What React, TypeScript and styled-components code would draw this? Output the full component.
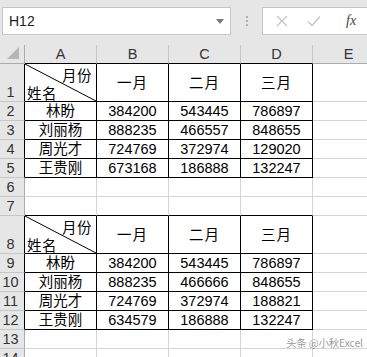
import React from "react";
import styled, { createGlobalStyle } from "styled-components";

const Global = createGlobalStyle`
  html, body { margin: 0; padding: 0; background: #fff; }
  body { width: 367px; height: 357px; overflow: hidden; }
`;

const Page = styled.div`
  position: relative;
  width: 367px;
  height: 357px;
  overflow: hidden;
  font-family: "Liberation Sans", "Noto Sans CJK SC", sans-serif;
`;

const FormulaBar = styled.div`
  height: 45px;
  box-sizing: border-box;
  background: #e6e6e6;
  display: flex;
  align-items: flex-start;
  padding: 7px 0 0 2px;
`;

const NameBox = styled.div`
  box-sizing: border-box;
  width: 229px;
  height: 28px;
  background: #fff;
  border: 1px solid #c6c6c6;
  display: flex;
  align-items: center;
  justify-content: space-between;
  padding: 0 6px 0 6px;
  font-size: 14px;
  color: #222;
`;

const Caret = styled.span`
  width: 0;
  height: 0;
  border-left: 4px solid transparent;
  border-right: 4px solid transparent;
  border-top: 5px solid #7a7a7a;
`;

const Dots = styled.div`
  width: 31px;
  height: 28px;
  display: flex;
  flex-direction: column;
  align-items: center;
  justify-content: center;
  gap: 2px;
  & > i {
    display: block;
    width: 2px;
    height: 2px;
    background: #b0b0b0;
  }
`;

const FormulaBox = styled.div`
  box-sizing: border-box;
  flex: 1;
  height: 28px;
  background: #fff;
  border: 1px solid #c6c6c6;
  border-right: none;
  display: flex;
  align-items: center;
  padding-left: 13px;
  gap: 19px;
`;

const Fx = styled.span`
  font-family: "Liberation Serif", serif;
  font-style: italic;
  font-size: 14px;
  color: #444;
  margin-left: 6px;
`;

const Sheet = styled.div`
  display: grid;
  grid-template-columns: 25px 72px 72px 72px 72px 72px;
`;

const Cell = styled.div<{ $r: string; $b: string; $h: number; $hdr?: boolean; $align?: string }>`
  box-sizing: border-box;
  height: ${(p) => p.$h}px;
  border-right: 1px solid ${(p) => p.$r};
  border-bottom: 1px solid ${(p) => p.$b};
  background: ${(p) => (p.$hdr ? "#e6e6e6" : "#fff")};
  display: flex;
  justify-content: center;
  align-items: ${(p) => p.$align || "center"};
  font-size: 14.5px;
  color: ${(p) => (p.$hdr ? "#333" : "#000")};
  line-height: 18px;
  white-space: nowrap;
  position: relative;
`;

const RowNum = styled.span`
  padding-right: 3px;
`;

const Corner = styled.div`
  position: absolute;
  right: 5px;
  bottom: 4px;
  width: 0;
  height: 0;
  border-left: 12px solid transparent;
  border-bottom: 12px solid #b5b5b5;
`;

const DiagCell = styled.div`
  position: absolute;
  inset: 0;
  display: flex;
  flex-direction: column;
  justify-content: space-between;
  padding: 3px 4px 1px 2px;
`;

const TopLabel = styled.span`
  align-self: flex-end;
  letter-spacing: 0.5px;
`;

const BottomLabel = styled.span`
  align-self: flex-start;
  letter-spacing: 0.5px;
`;

const DiagSvg = styled.svg`
  position: absolute;
  inset: 0;
  width: 100%;
  height: 100%;
`;

const HeadText = styled.span`
  letter-spacing: 1px;
`;

const Watermark = styled.div`
  position: absolute;
  left: 286px;
  top: 336px;
  font-family: "Noto Sans CJK SC", sans-serif;
  font-size: 10.5px;
  line-height: 13px;
  color: rgba(120, 120, 120, 0.75);
  letter-spacing: -0.2px;
  white-space: nowrap;
`;

type Row = [string, number, number, number];

const table1: Row[] = [
  ["林盼", 384200, 543445, 786897],
  ["刘丽杨", 888235, 466557, 848655],
  ["周光才", 724769, 372974, 129020],
  ["王贵刚", 673168, 186888, 132247],
];
const table2: Row[] = [
  ["林盼", 384200, 543445, 786897],
  ["刘丽杨", 888235, 466666, 848655],
  ["周光才", 724769, 372974, 188821],
  ["王贵刚", 634579, 186888, 132247],
];

type RowDef =
  | { kind: "blank"; n: number; topOfTable?: boolean }
  | { kind: "head"; n: number }
  | { kind: "data"; n: number; row: Row };

const rows: RowDef[] = [
  { kind: "head", n: 1 },
  ...table1.map((row, i) => ({ kind: "data" as const, n: 2 + i, row })),
  { kind: "blank", n: 6 },
  { kind: "blank", n: 7, topOfTable: true },
  { kind: "head", n: 8 },
  ...table2.map((row, i) => ({ kind: "data" as const, n: 9 + i, row })),
  { kind: "blank", n: 13 },
  { kind: "blank", n: 14 },
];

const GRID = "#d4d4d4";
const HDRLINE = "#c6c6c6";
const HDREDGE = "#ababab";
const BLACK = "#000";

export default function App() {
  const cols = ["A", "B", "C", "D", "E"];
  return (
    <Page>
      <Global />
      <FormulaBar>
        <NameBox>
          <span>H12</span>
          <Caret />
        </NameBox>
        <Dots>
          <i />
          <i />
          <i />
        </Dots>
        <FormulaBox>
          <svg width="12" height="12" viewBox="0 0 12 12">
            <path d="M1 1 L11 11 M11 1 L1 11" stroke="#c4c4c4" strokeWidth="1.3" />
          </svg>
          <svg width="14" height="12" viewBox="0 0 14 12">
            <path d="M1 6.5 L5 10.5 L13 1.5" stroke="#c4c4c4" strokeWidth="1.4" fill="none" />
          </svg>
          <Fx>fx</Fx>
        </FormulaBox>
      </FormulaBar>
      <Sheet>
        <Cell $h={19} $r={HDREDGE} $b={HDREDGE} $hdr>
          <Corner />
        </Cell>
        {cols.map((c, i) => (
          <Cell key={c} $h={19} $r={HDRLINE} $b={i < 4 ? BLACK : HDREDGE} $hdr>
            {c}
          </Cell>
        ))}
        {rows.map((r) => {
          const inTable = r.kind !== "blank";
          const h = r.kind === "head" ? 38 : 19;
          return (
            <React.Fragment key={r.n}>
              <Cell $h={h} $r={inTable ? BLACK : HDREDGE} $b={HDRLINE} $hdr $align="flex-end">
                <RowNum>{r.n}</RowNum>
              </Cell>
              {r.kind === "head" && (
                <>
                  <Cell $h={h} $r={BLACK} $b={BLACK}>
                    <DiagSvg preserveAspectRatio="none" viewBox="0 0 100 100">
                      <line x1="0" y1="0" x2="100" y2="100" stroke="#000" strokeWidth="1" vectorEffect="non-scaling-stroke" />
                    </DiagSvg>
                    <DiagCell>
                      <TopLabel>月份</TopLabel>
                      <BottomLabel>姓名</BottomLabel>
                    </DiagCell>
                  </Cell>
                  {["一月", "二月", "三月"].map((m) => (
                    <Cell key={m} $h={h} $r={BLACK} $b={BLACK}>
                      <HeadText>{m}</HeadText>
                    </Cell>
                  ))}
                  <Cell $h={h} $r={GRID} $b={GRID} />
                </>
              )}
              {r.kind === "data" && (
                <>
                  {r.row.map((v, i) => (
                    <Cell key={i} $h={h} $r={BLACK} $b={BLACK}>
                      {v}
                    </Cell>
                  ))}
                  <Cell $h={h} $r={GRID} $b={GRID} />
                </>
              )}
              {r.kind === "blank" &&
                cols.map((c, i) => (
                  <Cell key={c} $h={h} $r={GRID} $b={r.topOfTable && i < 4 ? BLACK : GRID} />
                ))}
            </React.Fragment>
          );
        })}
      </Sheet>
      <Watermark>头条 @小秋Excel</Watermark>
    </Page>
  );
}
